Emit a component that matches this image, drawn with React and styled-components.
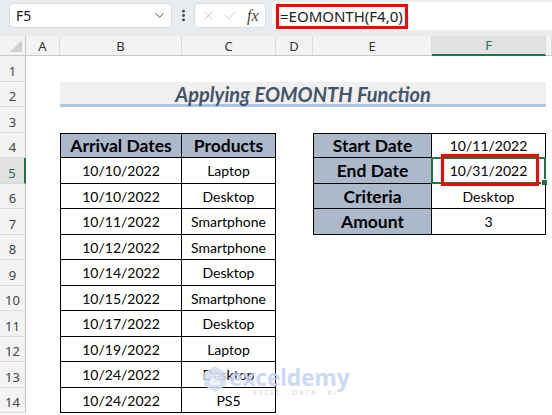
import React from 'react';
import styled, { createGlobalStyle } from 'styled-components';
import { ChevronDown, EllipsisVertical, X, Check } from 'lucide-react';

const GlobalStyle = createGlobalStyle`
  html, body { margin: 0; padding: 0; background: #fff; }
  body { width: 552px; height: 415px; overflow: hidden; }
`;

const Frame = styled.div`
  position: relative;
  width: 552px;
  height: 415px;
  overflow: hidden;
  display: flex;
  flex-direction: column;
  background: #fff;
  font-family: "Noto Sans", "Open Sans", sans-serif;
`;

const Toolbar = styled.div`
  flex: none;
  height: 36px;
  box-sizing: border-box;
  background: #e9ecef;
  display: flex;
  align-items: flex-start;
  padding: 3px 0 0 9px;
`;

const NameBox = styled.div`
  width: 163px;
  height: 25px;
  box-sizing: border-box;
  background: #fff;
  border: 1px solid #d9dbde;
  border-radius: 5px;
  display: flex;
  align-items: center;
  justify-content: space-between;
  padding: 0 4px 0 6px;
  font-size: 14px;
  color: #222;
`;

const Dots = styled.div`
  width: 22px;
  height: 25px;
  display: flex;
  align-items: center;
  justify-content: center;
  color: #444;
`;

const FxBox = styled.div`
  width: 72px;
  height: 25px;
  box-sizing: border-box;
  background: #fff;
  border: 1px solid #d9dbde;
  border-radius: 5px;
  display: flex;
  align-items: center;
  gap: 7px;
  padding: 0 0 0 6px;
  color: #bdbdbd;
`;

const Fx = styled.span`
  font-family: "Liberation Serif", serif;
  font-style: italic;
  font-size: 16px;
  color: #444;
  margin-left: 2px;
`;

const FormulaBar = styled.div`
  flex: 1;
  height: 28px;
  margin: -1px 0 0 6px;
  box-sizing: border-box;
  background: #fff;
  border-radius: 5px 0 0 5px;
  display: flex;
  align-items: center;
  padding-left: 4px;
`;

const Formula = styled.div`
  height: 25px;
  box-sizing: border-box;
  border: 3px solid #ff0000;
  display: flex;
  align-items: center;
  padding: 0 2px 0 1px;
  font-size: 15px;
  color: #222;
`;

const Sheet = styled.div`
  flex: 1;
  display: grid;
  grid-template-columns: 26px 34px 122px 94px 37px 119px 114px 1fr;
  grid-template-rows: 20px repeat(14, 25.5px);
  font-family: Lato, "Liberation Sans", sans-serif;
  color: #000;
`;

const Corner = styled.div`
  background: #f3f3f3;
  border-right: 1px solid #c8c8c8;
  border-bottom: 1px solid #c8c8c8;
  display: flex;
  align-items: flex-end;
  justify-content: flex-end;
  padding: 0 3px 3px 0;
  box-sizing: border-box;
`;

const ColHead = styled.div`
  box-sizing: border-box;
  background: ${p => (p.$active ? '#e1e1e1' : '#f3f3f3')};
  border-right: 1px solid #dadada;
  border-bottom: ${p => (p.$active ? '2px solid #217346' : '1px solid #c8c8c8')};
  display: flex;
  align-items: center;
  justify-content: center;
  font-family: "Noto Sans", sans-serif;
  font-size: 13px;
  color: ${p => (p.$active ? '#217346' : '#333')};
`;

const RowHead = styled.div`
  box-sizing: border-box;
  background: ${p => (p.$active ? '#e1e1e1' : '#f3f3f3')};
  border-right: ${p => (p.$active ? '2px solid #217346' : '1px solid #c8c8c8')};
  border-bottom: 1px solid #dadada;
  display: flex;
  align-items: center;
  justify-content: center;
  padding-top: 5px;
  font-family: "Noto Sans", sans-serif;
  font-size: 13px;
  color: ${p => (p.$active ? '#217346' : '#444')};
`;

const Cell = styled.div`
  position: relative;
  box-sizing: border-box;
  display: flex;
  align-items: center;
  justify-content: center;
  white-space: nowrap;
  padding-top: 1px;
  font-size: ${p => (p.$bold ? '17.5px' : '14px')};
  font-weight: ${p => (p.$bold ? 700 : 400)};
  background: ${p => (p.$head ? '#acb9ca' : 'transparent')};
  ${p => p.$boxed && 'border-right: 1px solid #000; border-bottom: 1px solid #000;'}
  ${p => p.$left && 'border-left: 1px solid #000;'}
  ${p => p.$top && 'border-top: 1px solid #000;'}
`;

const Title = styled.div`
  grid-column: span 5;
  box-sizing: border-box;
  background: #f0f0f0;
  border-bottom: 3px solid #a9c6e4;
  display: flex;
  align-items: center;
  justify-content: center;
  padding-top: 2px;
  font-size: 20px;
  font-weight: 700;
  font-style: italic;
  color: #44546a;
`;

const Selection = styled.div`
  position: absolute;
  left: -1px;
  right: -1px;
  top: -1px;
  bottom: -1px;
  border: 2px solid #217346;
  pointer-events: none;
`;

const Handle = styled.div`
  position: absolute;
  right: -4px;
  bottom: -4px;
  width: 5px;
  height: 5px;
  background: #217346;
  border: 1px solid #fff;
`;

const Mark = styled.div`
  position: absolute;
  left: 9px;
  right: 6px;
  top: -4px;
  bottom: -3px;
  border: 3px solid #ff0000;
  pointer-events: none;
`;

const Watermark = styled.div`
  position: absolute;
  left: 203px;
  top: 365px;
  display: flex;
  align-items: flex-start;
  gap: 2px;
  opacity: 0.85;
  pointer-events: none;
`;

const WmText = styled.div`
  display: flex;
  flex-direction: column;
  align-items: flex-end;
`;

const WmName = styled.span`
  font-family: "Open Sans", sans-serif;
  font-weight: 700;
  font-size: 23px;
  line-height: 25px;
  color: #c3d3f5;
  letter-spacing: -0.3px;
`;

const WmTag = styled.span`
  font-family: "Open Sans", sans-serif;
  font-size: 7.5px;
  letter-spacing: 1.5px;
  color: #cfcfcf;
  margin-top: -3px;
  margin-right: 12px;
`;

const cols = ['A', 'B', 'C', 'D', 'E', 'F'];

const arrivals = [
  ['10/10/2022', 'Laptop'],
  ['10/10/2022', 'Desktop'],
  ['10/11/2022', 'Smartphone'],
  ['10/12/2022', 'Smartphone'],
  ['10/14/2022', 'Desktop'],
  ['10/15/2022', 'Smartphone'],
  ['10/17/2022', 'Desktop'],
  ['10/19/2022', 'Laptop'],
  ['10/24/2022', 'Desktop'],
  ['10/24/2022', 'PS5'],
];

const summary = [
  ['Start Date', '10/11/2022'],
  ['End Date', '10/31/2022'],
  ['Criteria', 'Desktop'],
  ['Amount', '3'],
];

function renderRow(r) {
  const cells = [<RowHead key="h" $active={r === 5}>{r}</RowHead>, <div key="a" />];

  if (r === 2) {
    cells.push(<Title key="t">Applying EOMONTH Function</Title>);
    cells.push(<div key="z" />);
    return cells;
  }

  // columns B, C
  if (r === 4) {
    cells.push(<Cell key="b" $boxed $left $top $head $bold>Arrival Dates</Cell>);
    cells.push(<Cell key="c" $boxed $top $head $bold>Products</Cell>);
  } else if (r > 4) {
    const [d, p] = arrivals[r - 5];
    cells.push(<Cell key="b" $boxed $left>{d}</Cell>);
    cells.push(<Cell key="c" $boxed>{p}</Cell>);
  } else {
    cells.push(<div key="b" />, <div key="c" />);
  }

  cells.push(<div key="d" />);

  // columns E, F
  if (r >= 4 && r <= 7) {
    const [label, value] = summary[r - 4];
    cells.push(<Cell key="e" $boxed $left $top={r === 4} $head $bold>{label}</Cell>);
    cells.push(
      <Cell key="f" $boxed $top={r === 4}>
        {value}
        {r === 5 && (
          <>
            <Selection>
              <Handle />
            </Selection>
            <Mark />
          </>
        )}
      </Cell>
    );
  } else {
    cells.push(<div key="e" />, <div key="f" />);
  }

  cells.push(<div key="z" />);
  return cells;
}

export default function App() {
  const rows = Array.from({ length: 14 }, (_, i) => i + 1);
  return (
    <Frame>
      <GlobalStyle />
      <Toolbar>
        <NameBox>
          F5
          <ChevronDown size={15} color="#555" strokeWidth={1.6} />
        </NameBox>
        <Dots>
          <EllipsisVertical size={15} strokeWidth={2.6} />
        </Dots>
        <FxBox>
          <X size={15} strokeWidth={1.3} />
          <Check size={15} strokeWidth={1.3} />
          <Fx>fx</Fx>
        </FxBox>
        <FormulaBar>
          <Formula>=EOMONTH(F4,0)</Formula>
        </FormulaBar>
      </Toolbar>
      <Sheet>
        <Corner>
          <svg width="12" height="12" viewBox="0 0 12 12">
            <path d="M12 0 L12 12 L0 12 Z" fill="#d0d0d0" />
          </svg>
        </Corner>
        {cols.map(c => (
          <ColHead key={c} $active={c === 'F'}>{c}</ColHead>
        ))}
        <ColHead />
        {rows.map(r => (
          <React.Fragment key={r}>{renderRow(r)}</React.Fragment>
        ))}
      </Sheet>
      <Watermark>
        <svg width="24" height="28" viewBox="0 0 24 28">
          <path d="M12 1 L23 7.5 L23 20.5 L12 27 L1 20.5 L1 7.5 Z" fill="#d2ddf7" />
          <path d="M7 9 L17 9 L17 12 L10 12 L10 13 L16 13 L16 16 L10 16 L10 17 L17 17 L17 20 L7 20 Z" fill="#eef2fc" />
        </svg>
        <WmText>
          <WmName>exceldemy</WmName>
          <WmTag>EXCEL · DATA · BI</WmTag>
        </WmText>
      </Watermark>
    </Frame>
  );
}
